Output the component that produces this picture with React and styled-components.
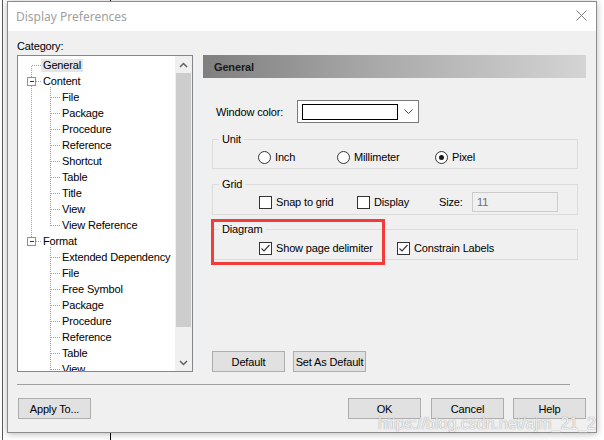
import React from 'react';
import styled, { createGlobalStyle } from 'styled-components';

const GlobalStyle = createGlobalStyle`
  html, body { margin: 0; padding: 0; background: #fff; }
  body { font-family: "Liberation Sans", Arial, sans-serif; font-size: 11px; letter-spacing: -0.15px; color: #000; }
  * { box-sizing: border-box; }
`;

const Page = styled.div`
  position: relative;
  width: 604px;
  height: 440px;
  overflow: hidden;
  display: flex;
  background: #fff;
`;

const DeskEdge = styled.div`
  width: 1px;
  margin-left: 2px;
  background: #5a5a5a;
  flex-shrink: 0;
`;

const DeskColumn = styled.div`
  margin-left: 4px;
  display: flex;
  flex-direction: column;
`;

const DeskStub = styled.div`
  width: 1px;
  height: ${(p) => p.$h}px;
  margin-left: 103px;
  background: #000;
  flex-shrink: 0;
`;

const Dialog = styled.div`
  width: 590px;
  height: 432px;
  flex-shrink: 0;
  border: 1px solid #8c8c8c;
  box-shadow: 0 1px 7px rgba(0, 0, 0, 0.28);
  background: #f0f0f0;
  display: flex;
  flex-direction: column;
`;

const TitleBar = styled.div`
  height: 29px;
  flex-shrink: 0;
  background: #fff;
  display: flex;
  align-items: center;
  justify-content: space-between;
  padding: 0 9px 0 8px;
`;

const Title = styled.span`
  font-family: "Noto Sans", "Open Sans", sans-serif;
  font-size: 12px;
  letter-spacing: 0;
  color: #a0a0a0;
`;

const CloseIcon = styled.svg`
  width: 11px;
  height: 11px;
  display: block;
  margin-top: -2px;
`;

const Body = styled.div`
  flex: 1;
  display: flex;
  flex-direction: column;
  padding: 8px 9px 0 9px;
`;

const Main = styled.div`
  display: flex;
  height: 333px;
`;

const LeftCol = styled.div`
  width: 176px;
  display: flex;
  flex-direction: column;
`;

const FieldLabel = styled.div`
  line-height: 14px;
  margin-bottom: 2px;
`;

const Tree = styled.div`
  height: 317px;
  border: 1px solid #828790;
  background: #fff;
  display: flex;
`;

const TreeList = styled.div`
  position: relative;
  flex: 1;
  overflow: hidden;
  padding-top: 1px;
`;

const TreeLines = styled.svg`
  position: absolute;
  left: 0;
  top: 0;
  width: 157px;
  height: 315px;
`;

const TreeRow = styled.div`
  position: relative;
  height: 16px;
  display: flex;
  align-items: center;
  padding-left: ${(p) => (p.$child ? 42 : 23)}px;
`;

const TreeText = styled.span`
  line-height: 13px;
  padding: 0 2px;
  white-space: nowrap;
  background: ${(p) => (p.$selected ? '#e5e5e5' : 'transparent')};
`;

const ScrollBar = styled.div`
  width: 17px;
  background: #f0f0f0;
  display: flex;
  flex-direction: column;
`;

const ScrollButton = styled.div`
  height: 17px;
  display: flex;
  align-items: center;
  justify-content: center;
  flex-shrink: 0;
`;

const ScrollTrack = styled.div`
  flex: 1;
  display: flex;
  flex-direction: column;
`;

const ScrollThumb = styled.div`
  height: 254px;
  margin: 0 1px;
  background: #cdcdcd;
`;

const RightCol = styled.div`
  position: relative;
  width: 383px;
  margin-left: 10px;
  padding-top: 16px;
  display: flex;
  flex-direction: column;
`;

const SectionHeader = styled.div`
  height: 23px;
  flex-shrink: 0;
  background: linear-gradient(to right, #7f7f7f 0%, #a9a9a9 45%, #d4d4d4 100%);
  display: flex;
  align-items: center;
  padding-left: 11px;
  font-weight: bold;
  color: #1a1a1a;
`;

const ColorRow = styled.div`
  display: flex;
  align-items: center;
  margin-top: 22px;
  padding-left: 13px;
`;

const RowLabel = styled.span`
  width: ${(p) => p.$w}px;
  flex-shrink: 0;
`;

const Combo = styled.div`
  width: 122px;
  height: 23px;
  border: 1px solid #7a7a7a;
  background: #fff;
  display: flex;
  align-items: center;
  padding-left: 4px;
`;

const Swatch = styled.div`
  width: 96px;
  height: 16px;
  border: 1px solid #000;
  background: #fff;
`;

const Chevron = styled.svg`
  width: 9px;
  height: 5px;
  margin-left: auto;
  margin-right: 5px;
  display: block;
`;

const Group = styled.fieldset`
  margin: ${(p) => p.$mt}px 0 0 9px;
  width: 366px;
  min-width: 0;
  padding: ${(p) => p.$pt}px 0 ${(p) => p.$pb}px 0;
  border: 1px solid #dcdcdc;
`;

const Legend = styled.legend`
  margin-left: 6px;
  padding: 0 3px;
  line-height: 12px;
  font-size: 11px;
`;

const OptionRow = styled.div`
  display: flex;
  align-items: center;
  height: ${(p) => p.$h}px;
  padding-left: ${(p) => p.$pl}px;
`;

const Option = styled.label`
  display: flex;
  align-items: center;
  width: ${(p) => (p.$w ? `${p.$w}px` : 'auto')};
  flex-shrink: 0;
  gap: 4px;
  white-space: nowrap;
`;

const RadioCircle = styled.span`
  width: 13px;
  height: 13px;
  border-radius: 50%;
  border: 1px solid #333;
  background: #fff;
  display: inline-flex;
  align-items: center;
  justify-content: center;
  flex-shrink: 0;
  &::after {
    content: '';
    width: 5px;
    height: 5px;
    border-radius: 50%;
    background: ${(p) => (p.$on ? '#1a1a1a' : 'transparent')};
  }
`;

const CheckBox = styled.span`
  width: 13px;
  height: 13px;
  border: 1px solid #333;
  background: #fff;
  display: inline-flex;
  align-items: center;
  justify-content: center;
  flex-shrink: 0;
`;

const SizeLabel = styled.span`
  width: 33px;
  flex-shrink: 0;
`;

const SizeInput = styled.div`
  width: 86px;
  height: 20px;
  border: 1px solid #cccccc;
  background: #f0f0f0;
  color: #6d6d78;
  display: flex;
  align-items: center;
  padding-left: 4px;
`;

const Highlight = styled.div`
  position: absolute;
  left: 8px;
  top: 180px;
  width: 174px;
  height: 46px;
  border: 3px solid #f23b3b;
  pointer-events: none;
`;

const ButtonRow = styled.div`
  margin-top: auto;
  display: flex;
  padding-left: 9px;
  gap: 8px;
`;

const Button = styled.button`
  width: 73px;
  height: 21px;
  margin-left: ${(p) => p.$ml || 0}px;
  border: 1px solid #adadad;
  background: #e1e1e1;
  font-family: "Liberation Sans", Arial, sans-serif;
  font-size: 11px;
  letter-spacing: -0.15px;
  color: #000;
  padding: 0;
  flex-shrink: 0;
`;

const Separator = styled.div`
  margin-top: 12px;
  width: 553px;
  height: 1px;
  background: #a0a0a0;
`;

const Footer = styled.div`
  margin-top: 13px;
  display: flex;
  padding-left: 1px;
`;

const Watermark = styled.div`
  position: absolute;
  right: 8px;
  bottom: 8px;
  font-family: "Liberation Sans", Arial, sans-serif;
  font-size: 16px;
  line-height: 17px;
  letter-spacing: 0;
  color: rgba(255, 255, 255, 0.85);
  text-shadow: 0 0 1px rgba(110, 110, 110, 0.55), 0 0 1px rgba(110, 110, 110, 0.4);
  pointer-events: none;
  white-space: nowrap;
`;

const rows = [
  { t: 'General', sel: true },
  { t: 'Content', box: true },
  { t: 'File', child: true },
  { t: 'Package', child: true },
  { t: 'Procedure', child: true },
  { t: 'Reference', child: true },
  { t: 'Shortcut', child: true },
  { t: 'Table', child: true },
  { t: 'Title', child: true },
  { t: 'View', child: true },
  { t: 'View Reference', child: true },
  { t: 'Format', box: true },
  { t: 'Extended Dependency', child: true },
  { t: 'File', child: true },
  { t: 'Free Symbol', child: true },
  { t: 'Package', child: true },
  { t: 'Procedure', child: true },
  { t: 'Reference', child: true },
  { t: 'Table', child: true },
  { t: 'View', child: true },
];

const cy = (i) => 10 + 16 * i;
const dot = { stroke: '#a0a0a0', strokeWidth: 1, strokeDasharray: '1 1', shapeRendering: 'crispEdges' };

function TreeConnectors() {
  return (
    <TreeLines viewBox="0 0 157 315">
      <line x1="13.5" y1={cy(0)} x2="13.5" y2={cy(11)} {...dot} />
      <line x1="32.5" y1={cy(1) + 5} x2="32.5" y2={cy(10)} {...dot} />
      <line x1="32.5" y1={cy(11) + 5} x2="32.5" y2="315" {...dot} />
      {rows.map((r, i) => {
        const y = cy(i) - 0.5;
        if (r.child) return <line key={i} x1="33" y1={y} x2="42" y2={y} {...dot} />;
        if (r.box)
          return (
            <g key={i}>
              <line x1="18" y1={y} x2="23" y2={y} {...dot} />
              <rect x="9.5" y={y - 4} width="8" height="8" fill="#fff" stroke="#919191" shapeRendering="crispEdges" />
              <line x1="11.5" y1={y} x2="16" y2={y} stroke="#333" shapeRendering="crispEdges" />
            </g>
          );
        return <line key={i} x1="14" y1={y} x2="23" y2={y} {...dot} />;
      })}
    </TreeLines>
  );
}

const Arrow = ({ up }) => (
  <svg width="9" height="6" viewBox="0 0 9 6">
    <path d={up ? 'M1 5 L4.5 1.5 L8 5' : 'M1 1 L4.5 4.5 L8 1'} fill="none" stroke="#606060" strokeWidth="1.5" />
  </svg>
);

const Check = ({ on }) => (
  <CheckBox>
    {on && (
      <svg width="11" height="11" viewBox="0 0 11 11">
        <path d="M1.5 5.5 L4 8 L9.5 2" fill="none" stroke="#3a3a3a" strokeWidth="1.2" />
      </svg>
    )}
  </CheckBox>
);

export default function App() {
  return (
    <>
      <GlobalStyle />
      <Page>
        <DeskEdge />
        <DeskColumn>
          <DeskStub $h={1} />
          <Dialog>
            <TitleBar>
              <Title>Display Preferences</Title>
              <CloseIcon viewBox="0 0 11 11">
                <path d="M0.5 0.5 L10.5 10.5 M10.5 0.5 L0.5 10.5" stroke="#7a7a7a" strokeWidth="1" fill="none" />
              </CloseIcon>
            </TitleBar>
            <Body>
              <Main>
                <LeftCol>
                  <FieldLabel>Category:</FieldLabel>
                  <Tree>
                    <TreeList>
                      <TreeConnectors />
                      {rows.map((r, i) => (
                        <TreeRow key={i} $child={r.child}>
                          <TreeText $selected={r.sel}>{r.t}</TreeText>
                        </TreeRow>
                      ))}
                    </TreeList>
                    <ScrollBar>
                      <ScrollButton><Arrow up /></ScrollButton>
                      <ScrollTrack>
                        <ScrollThumb />
                      </ScrollTrack>
                      <ScrollButton><Arrow /></ScrollButton>
                    </ScrollBar>
                  </Tree>
                </LeftCol>
                <RightCol>
                  <SectionHeader>General</SectionHeader>
                  <ColorRow>
                    <RowLabel $w={81}>Window color:</RowLabel>
                    <Combo>
                      <Swatch />
                      <Chevron viewBox="0 0 9 5">
                        <path d="M0.5 0.5 L4.5 4.5 L8.5 0.5" fill="none" stroke="#444" strokeWidth="1" />
                      </Chevron>
                    </Combo>
                  </ColorRow>
                  <Group $mt={10} $pt={5} $pb={4}>
                    <Legend>Unit</Legend>
                    <OptionRow $h={14} $pl={45}>
                      <Option $w={79}><RadioCircle />Inch</Option>
                      <Option $w={98}><RadioCircle />Millimeter</Option>
                      <Option><RadioCircle $on />Pixel</Option>
                    </OptionRow>
                  </Group>
                  <Group $mt={9} $pt={2} $pb={2}>
                    <Legend>Grid</Legend>
                    <OptionRow $h={20} $pl={46}>
                      <Option $w={98}><Check />Snap to grid</Option>
                      <Option $w={82}><Check />Display</Option>
                      <SizeLabel>Size:</SizeLabel>
                      <SizeInput>11</SizeInput>
                    </OptionRow>
                  </Group>
                  <Group $mt={8} $pt={6} $pb={4}>
                    <Legend>Diagram</Legend>
                    <OptionRow $h={14} $pl={46}>
                      <Option $w={138}><Check on />Show page delimiter</Option>
                      <Option><Check on />Constrain Labels</Option>
                    </OptionRow>
                  </Group>
                  <Highlight />
                  <ButtonRow>
                    <Button>Default</Button>
                    <Button>Set As Default</Button>
                  </ButtonRow>
                </RightCol>
              </Main>
              <Separator />
              <Footer>
                <Button>Apply To...</Button>
                <Button $ml={257}>OK</Button>
                <Button $ml={10}>Cancel</Button>
                <Button $ml={9}>Help</Button>
              </Footer>
            </Body>
          </Dialog>
          <DeskStub $h={8} />
        </DeskColumn>
        <Watermark>https://blog.csdn.net/ajm_21_2</Watermark>
      </Page>
    </>
  );
}
